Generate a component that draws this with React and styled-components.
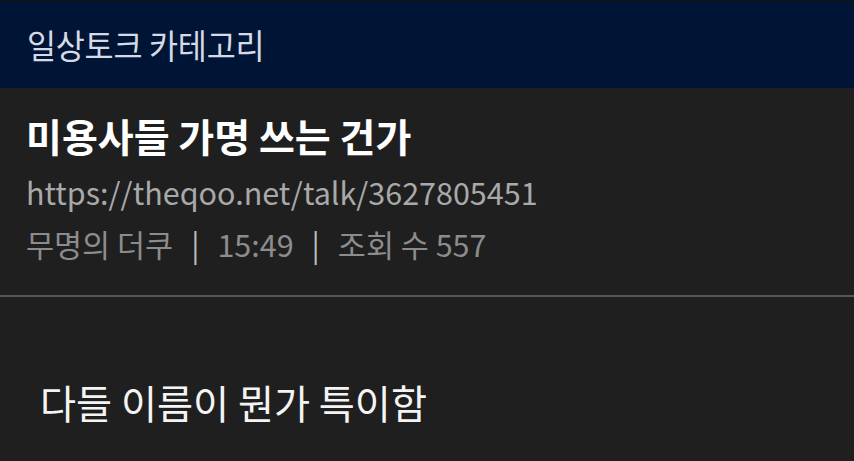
import React from 'react'
import styled, { createGlobalStyle } from 'styled-components'

const GlobalStyle = createGlobalStyle`
    html, body {
        margin: 0;
        padding: 0;
        background: #1f1f1f;
    }
    body {
        font-family: "Noto Sans CJK KR", "Noto Sans", sans-serif;
        width: 854px;
        height: 461px;
        overflow: hidden;
    }
`

const App = () => {
    return (
        <Page>
            <GlobalStyle />
            <Header>
                <HeaderTitle>일상토크 카테고리</HeaderTitle>
            </Header>
            <PostHead>
                <PostTitle>미용사들 가명 쓰는 건가</PostTitle>
                <PostUrl>https://theqoo.net/talk/3627805451</PostUrl>
                <Meta>
                    <span>무명의 더쿠</span>
                    <Bar>|</Bar>
                    <span>15:49</span>
                    <Bar>|</Bar>
                    <span>조회 수 557</span>
                </Meta>
            </PostHead>
            <Body>
                <BodyText>다들 이름이 뭔가 특이함</BodyText>
            </Body>
        </Page>
    )
}

const Page = styled.div`
    width: 854px;
    height: 461px;
    background: #1f1f1f;
    display: flex;
    flex-direction: column;
`

const Header = styled.div`
    height: 88px;
    background: #001435;
    border-top: 2px solid #0c1220;
    box-sizing: border-box;
    display: flex;
    align-items: center;
    padding: 0 0 2px 27px;
`

const HeaderTitle = styled.div`
    color: #d6dae4;
    font-size: 34px;
    letter-spacing: -0.3px;
    transform: scaleX(0.93);
    transform-origin: left center;
`

const PostHead = styled.div`
    padding: 20px 26px 0;
    height: 209px;
    box-sizing: border-box;
    border-bottom: 2px solid #565656;
    display: flex;
    flex-direction: column;
`

const PostTitle = styled.div`
    color: #ffffff;
    font-size: 39px;
    font-weight: 700;
    line-height: 54px;
`

const PostUrl = styled.div`
    color: #a9a9a9;
    font-size: 30.5px;
    line-height: 44px;
    margin-top: 8px;
`

const Meta = styled.div`
    color: #8c8c8c;
    font-size: 30.5px;
    line-height: 44px;
    margin-top: 8px;
    display: flex;
    gap: 18px;
`

const Bar = styled.span`
    color: #bdbdbd;
`

const Body = styled.div`
    padding: 77px 40px 0;
`

const BodyText = styled.div`
    color: #f4f4f4;
    font-size: 40px;
    line-height: 56px;
    transform: scaleX(0.98);
    transform-origin: left center;
`

export default App
